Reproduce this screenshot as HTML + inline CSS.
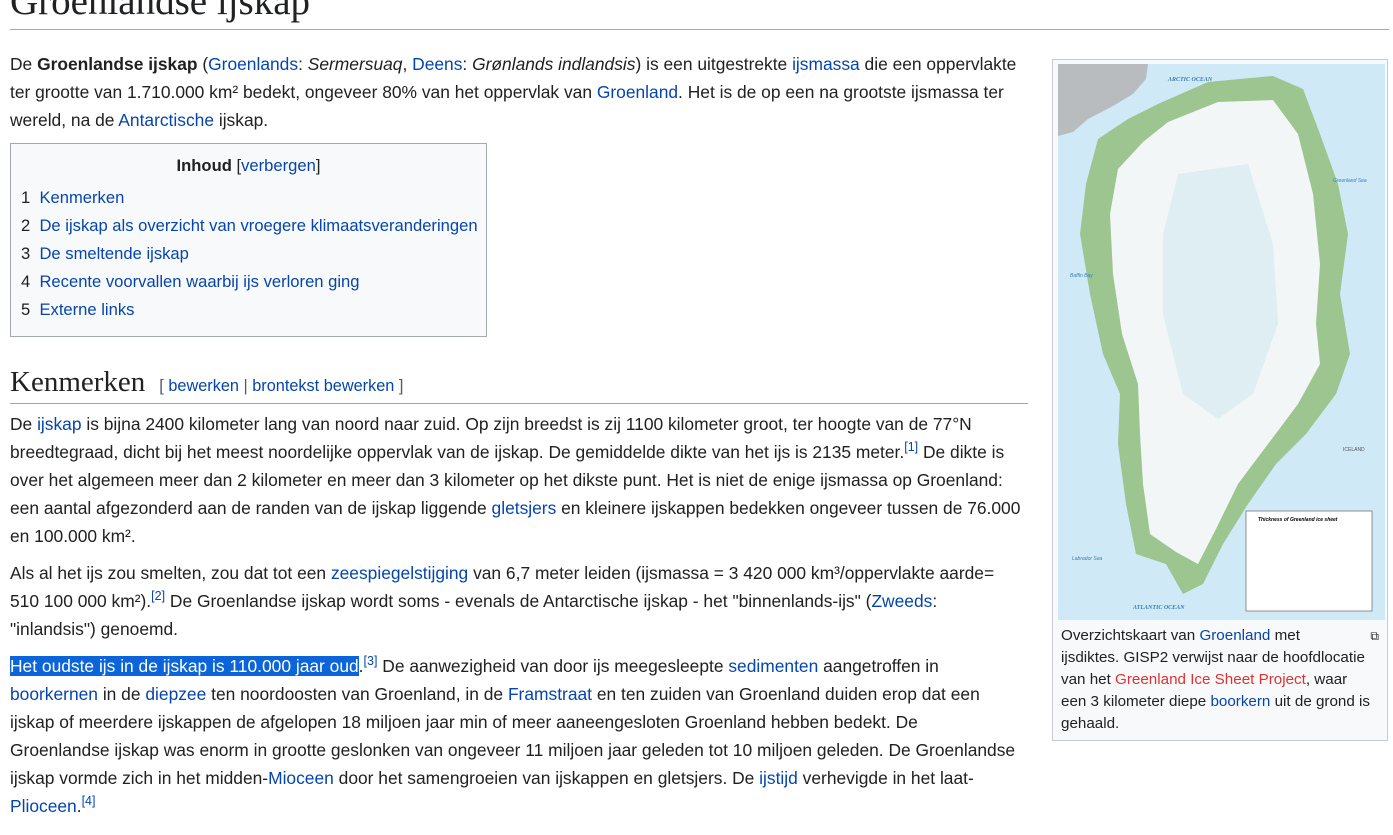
<!DOCTYPE html>
<html><head><meta charset="utf-8"><style>
body{margin:0;background:#fff;font-family:"Liberation Sans",Arial,sans-serif;color:#202122;width:1393px;height:835px;overflow:hidden;position:relative}
a{color:#0645ad;text-decoration:none}
a.new{color:#d33}
h1{position:absolute;left:10px;top:-24px;margin:0;font-family:"Liberation Serif",Georgia,serif;font-weight:normal;font-size:39px;line-height:52px;width:1379px;border-bottom:1px solid #a2a9b1;padding-bottom:1px}
.content{position:absolute;left:10px;top:50px;width:1040px;font-size:17.4px;line-height:28px;white-space:nowrap}
p{margin:0 0 9px 0}
sup{font-size:12.5px;line-height:0;vertical-align:7px}
.toc{border:1px solid #a2a9b1;background:#f8f9fa;width:455px;padding:8px 10px 12px 10px;margin:9px 0 28px 0;line-height:28px;font-size:16.6px}
.toc .t{text-align:center;font-weight:bold;margin-bottom:4px}
.toc .t span{font-weight:normal}
h2{font-family:"Liberation Serif",Georgia,serif;font-weight:normal;font-size:29px;margin:0 0 6px 0;line-height:34px;border-bottom:1px solid #a2a9b1;width:1018px;padding-bottom:0}
h2 small{font-family:"Liberation Sans",sans-serif;font-size:16.3px;color:#54595d;margin-left:14px}
.sel{background:#0b64d9;color:#fff}
.thumb{position:absolute;left:1052px;top:59px;width:334px;height:680px;border:1px solid #c8ccd1;background:#f8f9fa}
.thumb svg{position:absolute;left:5px;top:4px}
.cap{position:absolute;left:8px;top:565px;width:318px;font-size:15.2px;line-height:22px;white-space:nowrap}
.ic{position:absolute;right:0;top:0;font-size:12px}
</style></head><body>
<h1>Groenlandse ijskap</h1>
<div class="content">
<p>De <b>Groenlandse ijskap</b> (<a>Groenlands</a>: <i>Sermersuaq</i>, <a>Deens</a>: <i>Grønlands indlandsis</i>) is een uitgestrekte <a>ijsmassa</a> die een oppervlakte<br>ter grootte van 1.710.000 km² bedekt, ongeveer 80% van het oppervlak van <a>Groenland</a>. Het is de op een na grootste ijsmassa ter<br>wereld, na de <a>Antarctische</a> ijskap.</p>
<div class="toc"><div class="t">Inhoud <span>[<a>verbergen</a>]</span></div>
<div>1 &nbsp;<a>Kenmerken</a></div>
<div>2 &nbsp;<a>De ijskap als overzicht van vroegere klimaatsveranderingen</a></div>
<div>3 &nbsp;<a>De smeltende ijskap</a></div>
<div>4 &nbsp;<a>Recente voorvallen waarbij ijs verloren ging</a></div>
<div>5 &nbsp;<a>Externe links</a></div></div>
<h2>Kenmerken<small>[ <a>bewerken</a> | <a>brontekst bewerken</a> ]</small></h2>
<p>De <a>ijskap</a> is bijna 2400 kilometer lang van noord naar zuid. Op zijn breedst is zij 1100 kilometer groot, ter hoogte van de 77°N<br>breedtegraad, dicht bij het meest noordelijke oppervlak van de ijskap. De gemiddelde dikte van het ijs is 2135 meter.<sup><a>[1]</a></sup> De dikte is<br>over het algemeen meer dan 2 kilometer en meer dan 3 kilometer op het dikste punt. Het is niet de enige ijsmassa op Groenland:<br>een aantal afgezonderd aan de randen van de ijskap liggende <a>gletsjers</a> en kleinere ijskappen bedekken ongeveer tussen de 76.000<br>en 100.000 km².</p>
<p>Als al het ijs zou smelten, zou dat tot een <a>zeespiegelstijging</a> van 6,7 meter leiden (ijsmassa = 3 420 000 km³/oppervlakte aarde=<br>510 100 000 km²).<sup><a>[2]</a></sup> De Groenlandse ijskap wordt soms - evenals de Antarctische ijskap - het "binnenlands-ijs" (<a>Zweeds</a>:<br>"inlandsis") genoemd.</p>
<p><span class="sel">Het oudste ijs in de ijskap is 110.000 jaar oud</span>.<sup><a>[3]</a></sup> De aanwezigheid van door ijs meegesleepte <a>sedimenten</a> aangetroffen in<br><a>boorkernen</a> in de <a>diepzee</a> ten noordoosten van Groenland, in de <a>Framstraat</a> en ten zuiden van Groenland duiden erop dat een<br>ijskap of meerdere ijskappen de afgelopen 18 miljoen jaar min of meer aaneengesloten Groenland hebben bedekt. De<br>Groenlandse ijskap was enorm in grootte geslonken van ongeveer 11 miljoen jaar geleden tot 10 miljoen geleden. De Groenlandse<br>ijskap vormde zich in het midden-<a>Mioceen</a> door het samengroeien van ijskappen en gletsjers. De <a>ijstijd</a> verhevigde in het laat-<br><a>Plioceen</a>.<sup><a>[4]</a></sup></p>
</div>
<div class="thumb">
<svg width="327" height="556" viewBox="0 0 327 556">
<rect width="327" height="556" fill="#cfe9f7"/>
<path d="M0 0 H90 L88 15 L75 30 L55 42 L30 55 L15 68 L0 72Z" fill="#b8bcbf"/>
<path d="M100 40 L150 18 L215 12 L245 25 L262 70 L280 120 L290 170 L282 230 L292 290 L278 330 L248 370 L218 400 L190 440 L165 480 L145 520 L125 530 L108 500 L78 490 L68 440 L60 380 L62 330 L45 290 L32 230 L22 170 L28 120 L40 75 L70 55Z" fill="#9cc58f"/>
<path d="M110 58 L160 38 L215 36 L240 70 L255 130 L262 200 L258 260 L262 300 L240 340 L210 380 L180 420 L158 465 L140 500 L118 488 L92 470 L85 420 L82 370 L80 320 L64 270 L55 210 L52 150 L60 105 L85 78Z" fill="#f3f6f7"/>
<path d="M120 110 L190 100 L215 180 L220 260 L195 330 L160 355 L125 330 L105 250 L105 170Z" fill="#dfeef2"/>
<text x="110" y="17" font-size="6" fill="#3a7fb5" font-family="Liberation Serif" font-style="italic" font-weight="bold">ARCTIC OCEAN</text>
<text x="75" y="545" font-size="6" fill="#3a7fb5" font-family="Liberation Serif" font-style="italic" font-weight="bold">ATLANTIC OCEAN</text>
<text x="12" y="213" font-size="5" fill="#3a7fb5" font-style="italic">Baffin Bay</text>
<text x="275" y="118" font-size="5" fill="#3a7fb5" font-style="italic">Greenland Sea</text>
<text x="14" y="496" font-size="5" fill="#3a7fb5" font-style="italic">Labrador Sea</text>
<text x="285" y="387" font-size="5" fill="#555">ICELAND</text>
<rect x="188" y="447" width="126" height="100" fill="#fff" stroke="#666" stroke-width="0.7"/>
<text x="200" y="457" font-size="5" font-weight="bold" font-style="italic">Thickness of Greenland ice sheet</text>
</svg>
<div class="cap"><span class="ic">⧉</span>Overzichtskaart van <a>Groenland</a> met<br>ijsdiktes. GISP2 verwijst naar de hoofdlocatie<br>van het <a class="new">Greenland Ice Sheet Project</a>, waar<br>een 3 kilometer diepe <a>boorkern</a> uit de grond is<br>gehaald.</div>
</div>
</body></html>
